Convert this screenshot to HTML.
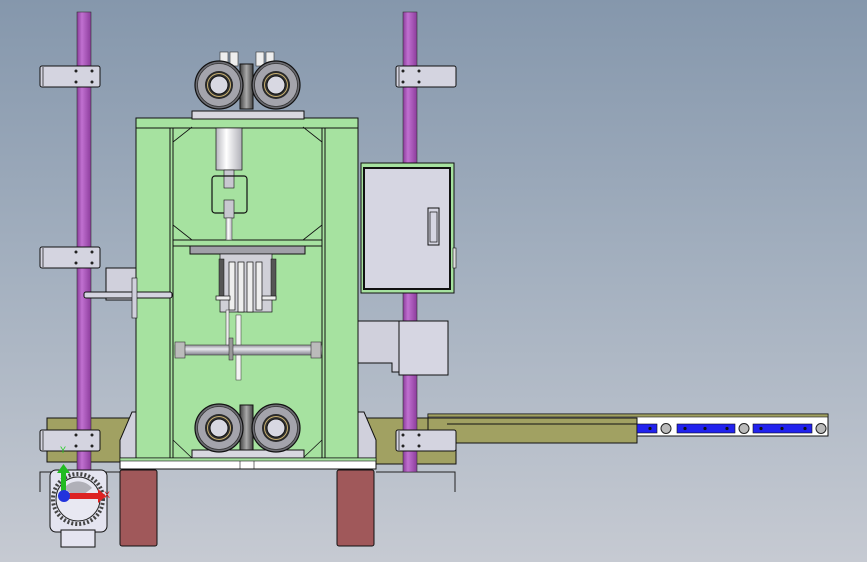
<!DOCTYPE html>
<html><head><meta charset="utf-8"><style>
html,body{margin:0;padding:0;width:867px;height:562px;overflow:hidden}
body{background:linear-gradient(180deg,#8597ac 0%,#a5b1c0 50%,#c6cad2 100%)}
svg{position:absolute;left:0;top:0}
</style></head><body>
<svg width="867" height="562" viewBox="0 0 867 562" xmlns="http://www.w3.org/2000/svg">
<defs>
<linearGradient id="pole" x1="0" x2="1"><stop offset="0" stop-color="#8a3c9a"/><stop offset=".35" stop-color="#c070d0"/><stop offset="1" stop-color="#8c3c9c"/></linearGradient>
<linearGradient id="cyl" x1="0" x2="1"><stop offset="0" stop-color="#b8b8c0"/><stop offset=".4" stop-color="#ffffff"/><stop offset="1" stop-color="#b0b0b8"/></linearGradient>
<linearGradient id="hbar" x1="0" y1="0" x2="0" y2="1"><stop offset="0" stop-color="#909098"/><stop offset=".4" stop-color="#e8e8ee"/><stop offset="1" stop-color="#80808a"/></linearGradient>
<linearGradient id="blk" x1="0" x2="1"><stop offset="0" stop-color="#444"/><stop offset=".5" stop-color="#aaa"/><stop offset="1" stop-color="#444"/></linearGradient>
<g id="roll">
<circle r="24" fill="#6c6c72" stroke="#111" stroke-width="1.2"/>
<circle r="21.5" fill="#a4a4ac" stroke="#333" stroke-width=".8"/>
<circle r="14" fill="#2a2a2a"/>
<circle r="12" fill="#c8b070"/>
<circle r="11" fill="#333"/>
<circle r="9" fill="#d8d8e2" stroke="#111"/>
</g>
<g id="brk">
<rect x="0" y="0" width="60" height="21" rx="2" fill="#d4d4e0" stroke="#111"/>
<line x1="3" y1="1" x2="3" y2="20" stroke="#111" stroke-width=".7"/>
</g>
</defs>

<!-- olive bases -->
<rect x="47" y="418" width="90" height="44" fill="#a1a162" stroke="#111"/>
<rect x="366" y="418" width="90" height="46" fill="#a1a162" stroke="#111"/>
<!-- rail -->
<rect x="428" y="414" width="400" height="22" fill="#fff" stroke="#111"/>
<rect x="428" y="414" width="400" height="3" fill="#a1a162" stroke="#111" stroke-width=".6"/>
<rect x="428" y="418" width="209" height="25" fill="#a1a162" stroke="#111"/>
<line x1="447" y1="424" x2="637" y2="424" stroke="#111"/>
<rect x="637" y="424" width="20" height="9" fill="#2222ee" stroke="#111" stroke-width=".6"/>
<circle cx="666" cy="428.5" r="5" fill="#bbb" stroke="#222"/>
<rect x="677" y="424" width="58" height="9" fill="#2222ee" stroke="#111" stroke-width=".6"/>
<circle cx="744" cy="428.5" r="5" fill="#bbb" stroke="#222"/>
<rect x="753" y="424" width="59" height="9" fill="#2222ee" stroke="#111" stroke-width=".6"/>
<circle cx="821" cy="428.5" r="5" fill="#bbb" stroke="#222"/>
<g fill="#111"><circle cx="650" cy="428.5" r="1.6"/><circle cx="685" cy="428.5" r="1.6"/><circle cx="705" cy="428.5" r="1.6"/><circle cx="727" cy="428.5" r="1.6"/><circle cx="761" cy="428.5" r="1.6"/><circle cx="782" cy="428.5" r="1.6"/><circle cx="805" cy="428.5" r="1.6"/></g>

<!-- side skirts -->
<path d="M120 468 L120 440 L132 412 L137 412 L137 468 Z" fill="#d0d0dc" stroke="#111"/>
<path d="M376 468 L376 440 L364 412 L358 412 L358 468 Z" fill="#d0d0dc" stroke="#111"/>
<path d="M40 492 L40 472 L136 472 M455 492 L455 472 L376 472" fill="none" stroke="#222"/>

<!-- poles -->
<rect x="77" y="12" width="14" height="460" fill="url(#pole)" stroke="#333" stroke-width=".6"/>
<rect x="403" y="12" width="14" height="460" fill="url(#pole)" stroke="#333" stroke-width=".6"/>

<!-- green frame -->
<rect x="136" y="118" width="222" height="340" fill="#a6e2a0" stroke="#111"/>
<rect x="136" y="118" width="222" height="10" fill="#a6e2a0" stroke="#111"/>
<line x1="170" y1="128" x2="170" y2="458" stroke="#111"/>
<line x1="173" y1="128" x2="173" y2="458" stroke="#111"/>
<line x1="322" y1="128" x2="322" y2="458" stroke="#111"/>
<line x1="325" y1="128" x2="325" y2="458" stroke="#111"/>
<rect x="173" y="240" width="149" height="6" fill="#a6e2a0" stroke="#111"/>
<g stroke="#111" stroke-width=".8" fill="none">
<path d="M173 142 L192 127 M322 142 L303 127 M173 225 L192 240 M322 225 L303 240"/>
<path d="M173 440 L192 458 M322 440 L303 458"/>
</g>
<!-- top rollers -->
<rect x="192" y="111" width="112" height="8" fill="#d8d8e0" stroke="#111"/>
<rect x="220" y="52" width="8" height="14" fill="#eee" stroke="#333" stroke-width=".6"/>
<rect x="230" y="52" width="8" height="14" fill="#eee" stroke="#333" stroke-width=".6"/>
<rect x="256" y="52" width="8" height="14" fill="#eee" stroke="#333" stroke-width=".6"/>
<rect x="266" y="52" width="8" height="14" fill="#eee" stroke="#333" stroke-width=".6"/>
<rect x="240" y="64" width="13" height="45" fill="url(#blk)" stroke="#111"/>
<use href="#roll" x="219" y="85"/>
<use href="#roll" x="276" y="85"/>
<!-- cylinder assembly -->
<rect x="216" y="128" width="26" height="42" fill="url(#cyl)" stroke="#111" stroke-width=".7"/>
<rect x="224" y="170" width="10" height="18" fill="#c8c8d0" stroke="#111" stroke-width=".6"/>
<rect x="212" y="176" width="35" height="37" rx="3" fill="none" stroke="#111" stroke-width="1.2"/>
<rect x="224" y="200" width="10" height="18" fill="#c8c8d0" stroke="#111" stroke-width=".6"/>
<rect x="226" y="218" width="6" height="22" fill="url(#cyl)" stroke="#333" stroke-width=".5"/>
<!-- middle mechanism -->
<rect x="190" y="246" width="115" height="8" fill="#a0a0a8" stroke="#111"/>
<rect x="220" y="254" width="52" height="58" fill="#d0d0d8" stroke="#111" stroke-width=".7"/>
<rect x="219" y="259" width="5" height="40" fill="#555" stroke="#111" stroke-width=".5"/>
<rect x="271" y="259" width="5" height="40" fill="#555" stroke="#111" stroke-width=".5"/>
<g stroke="#111" stroke-width=".7" fill="#eee">
<rect x="229" y="262" width="6" height="48"/><rect x="238" y="262" width="6" height="50"/><rect x="247" y="262" width="6" height="50"/><rect x="256" y="262" width="6" height="48"/>
<rect x="216" y="296" width="14" height="4"/><rect x="262" y="296" width="14" height="4"/>
</g>
<rect x="226" y="310" width="3" height="40" fill="#eee" stroke="#333" stroke-width=".5"/>
<rect x="236" y="315" width="5" height="65" fill="#f4f4f4" stroke="#333" stroke-width=".5"/>
<rect x="175" y="345" width="147" height="10" fill="url(#hbar)" stroke="#333" stroke-width=".6"/>
<rect x="175" y="342" width="10" height="16" fill="#bbb" stroke="#333" stroke-width=".6"/>
<rect x="311" y="342" width="10" height="16" fill="#bbb" stroke="#333" stroke-width=".6"/>
<rect x="229" y="338" width="4" height="22" fill="#999" stroke="#222" stroke-width=".5"/>
<!-- left device -->
<rect x="106" y="268" width="30" height="32" fill="#d0d0dc" stroke="#111"/>
<rect x="84" y="292" width="88" height="6" rx="2" fill="#d4d4e0" stroke="#111"/>
<rect x="132" y="278" width="5" height="40" fill="#d0d0dc" stroke="#111" stroke-width=".6"/>
<!-- control box -->
<rect x="361" y="163" width="93" height="130" fill="#a6e2a0" stroke="#111"/>
<rect x="364" y="168" width="86" height="121" fill="#d6d6e2" stroke="#111" stroke-width="2"/>
<rect x="428" y="208" width="11" height="37" fill="none" stroke="#111"/>
<rect x="430" y="212" width="7" height="30" fill="none" stroke="#111" stroke-width=".7"/>
<rect x="453" y="248" width="3" height="20" fill="#ddd" stroke="#111" stroke-width=".6"/>
<!-- lower box -->
<path d="M358 321 L400 321 L400 372 L392 372 L392 363 L360 363 L358 363 Z" fill="#d0d0dc" stroke="#111"/>
<rect x="399" y="321" width="49" height="54" fill="#d6d6e2" stroke="#111"/>
<!-- bottom rollers -->
<rect x="192" y="450" width="112" height="8" fill="#d8d8e0" stroke="#111"/>
<rect x="240" y="405" width="13" height="45" fill="url(#blk)" stroke="#111"/>
<use href="#roll" x="219" y="428"/>
<use href="#roll" x="276" y="428"/>
<!-- bottom white strip -->
<rect x="120" y="458" width="256" height="11" fill="#fff" stroke="#111"/>
<rect x="120" y="458" width="256" height="3" fill="#a6e2a0" stroke="#111" stroke-width=".6"/>
<line x1="240" y1="461" x2="240" y2="469" stroke="#111" stroke-width=".6"/>
<line x1="254" y1="461" x2="254" y2="469" stroke="#111" stroke-width=".6"/>
<!-- feet -->
<rect x="120" y="470" width="37" height="76" rx="2" fill="#a0585a" stroke="#111"/>
<rect x="337" y="470" width="37" height="76" rx="2" fill="#a0585a" stroke="#111"/>
<!-- brackets -->
<use href="#brk" x="40" y="66"/><use href="#brk" x="40" y="247"/><use href="#brk" x="40" y="430"/>
<use href="#brk" x="396" y="66"/><use href="#brk" x="396" y="430"/>
<g fill="#222">
<circle cx="76" cy="71" r="1.5"/><circle cx="92" cy="71" r="1.5"/><circle cx="76" cy="82" r="1.5"/><circle cx="92" cy="82" r="1.5"/>
<circle cx="76" cy="252" r="1.5"/><circle cx="92" cy="252" r="1.5"/><circle cx="76" cy="263" r="1.5"/><circle cx="92" cy="263" r="1.5"/>
<circle cx="76" cy="435" r="1.5"/><circle cx="92" cy="435" r="1.5"/><circle cx="76" cy="446" r="1.5"/><circle cx="92" cy="446" r="1.5"/>
<circle cx="403" cy="71" r="1.5"/><circle cx="419" cy="71" r="1.5"/><circle cx="403" cy="82" r="1.5"/><circle cx="419" cy="82" r="1.5"/>
<circle cx="403" cy="435" r="1.5"/><circle cx="419" cy="435" r="1.5"/><circle cx="403" cy="446" r="1.5"/><circle cx="419" cy="446" r="1.5"/>
</g>
<!-- motor -->
<rect x="50" y="470" width="57" height="62" rx="6" fill="#e4e4f0" stroke="#111"/>
<circle cx="78" cy="499" r="25" fill="none" stroke="#444" stroke-width="4" stroke-dasharray="2 2"/>
<circle cx="78" cy="499" r="22" fill="#e8e8f2" stroke="#222"/>
<path d="M64 488 A18 18 0 0 1 92 488 L78 499 Z" fill="#b0b0b8"/>
<rect x="61" y="530" width="34" height="17" fill="#e4e4f0" stroke="#111"/>
<!-- axes -->
<rect x="61" y="471" width="5" height="22" fill="#22bb22"/>
<path d="M57 473 L63.5 464 L70 473 Z" fill="#22bb22"/>
<rect x="64" y="493" width="36" height="6" fill="#dd2222"/>
<path d="M98 489 L106 496 L98 503 Z" fill="#dd2222"/>
<circle cx="64" cy="496" r="6" fill="#2233dd"/>
<text x="60" y="453" font-family="Liberation Sans, sans-serif" font-size="9" fill="#22cc22">Y</text>
<text x="104" y="498" font-family="Liberation Sans, sans-serif" font-size="9" fill="#dd2222">X</text>
</svg>
</body></html>
